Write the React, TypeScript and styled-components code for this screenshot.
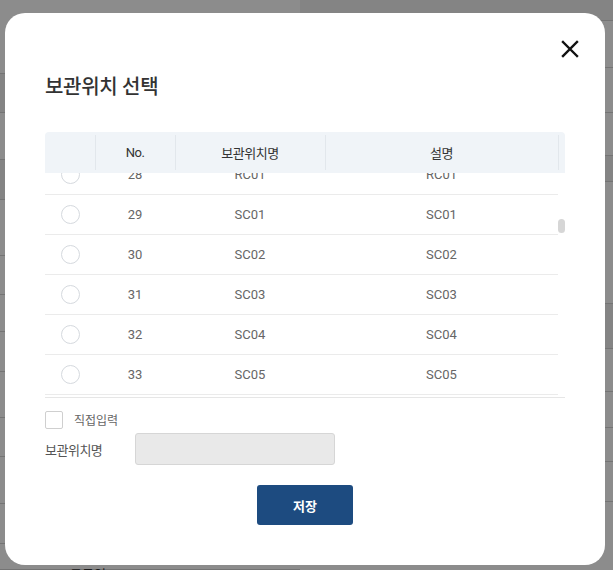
import React, { useEffect, useRef, useState } from 'react';
import styled, { createGlobalStyle } from 'styled-components';

const GlobalStyle = createGlobalStyle`
	* {
		box-sizing: border-box;
	}
	html, body {
		margin: 0;
		padding: 0;
		width: 613px;
		height: 570px;
		overflow: hidden;
		font-family: Roboto, 'Noto Sans CJK KR', sans-serif;
		background: #ffffff;
	}
`;

interface BgRow {
	height: number;
	shaded?: boolean;
	text?: string;
}

const leftRows: BgRow[] = [
	{ height: 74 },
	{ height: 39, shaded: true },
	{ height: 47 },
	{ height: 40, shaded: true },
	{ height: 56 },
	{ height: 39 },
	{ height: 37 },
	{ height: 40 },
	{ height: 46 },
	{ height: 39 },
	{ height: 47 },
	{ height: 40 },
	{ height: 26, text: '도급업' },
];

const rightRows: BgRow[] = [
	{ height: 12, shaded: true },
	{ height: 47 },
	{ height: 45 },
	{ height: 43 },
	{ height: 26, shaded: true },
	{ height: 122 },
	{ height: 45, shaded: true },
	{ height: 43 },
	{ height: 36 },
	{ height: 34 },
	{ height: 40 },
	{ height: 77 },
];

interface Location {
	no: number;
	name: string;
	desc: string;
}

const prefixCodes = ['RA', 'RB', 'RC'];

const buildLocations = (): Location[] => {
	const list: Location[] = [];
	for (let i = 1; i <= 131; i++) {
		let code = '';
		if (i < 28) {
			code = `${prefixCodes[Math.floor((i - 1) / 10) % 3]}${String(((i - 1) % 10) + 1).padStart(2, '0')}`;
		} else if (i === 28) {
			code = 'RC01';
		} else {
			code = `SC${String(i - 28).padStart(2, '0')}`;
		}
		list.push({ no: i, name: code, desc: code });
	}
	return list;
};

const VIEW_HEIGHT = 224;
const THUMB_MIN = 14;

const App: React.FC = () => {
	const [locations] = useState<Location[]>(buildLocations);
	const [selected, setSelected] = useState<number | null>(null);
	const [manual, setManual] = useState(false);
	const [manualName, setManualName] = useState('');
	const [thumb, setThumb] = useState({ top: 0, height: THUMB_MIN });
	const bodyRef = useRef<HTMLDivElement>(null);

	const updateThumb = () => {
		const el = bodyRef.current;
		if (!el) return;
		const height = Math.max(THUMB_MIN, (el.clientHeight * el.clientHeight) / el.scrollHeight);
		const range = el.scrollHeight - el.clientHeight;
		const top = range > 0 ? (el.scrollTop / range) * (el.clientHeight - height) : 0;
		setThumb({ top, height });
	};

	useEffect(() => {
		if (bodyRef.current) bodyRef.current.scrollTop = 1098;
		updateThumb();
	}, []);

	return (
		<>
			<GlobalStyle />
			<Page>
				<BgColumn $width={300}>
					{leftRows.map((row, i) => (
						<BgLine key={i} $height={row.height} $shaded={row.shaded}>
							{row.text && <BgText>{row.text}</BgText>}
						</BgLine>
					))}
				</BgColumn>
				<BgColumn $width={313}>
					{rightRows.map((row, i) => (
						<BgLine key={i} $height={row.height} $shaded={row.shaded} />
					))}
				</BgColumn>
			</Page>
			<Overlay>
				<Modal>
					<CloseRow>
						<CloseButton aria-label="닫기">
							<svg width="18" height="18" viewBox="0 0 18 18">
								<path d="M2 2 L16 16 M16 2 L2 16" stroke="#111" strokeWidth="2.4" strokeLinecap="square" />
							</svg>
						</CloseButton>
					</CloseRow>
					<Title>보관위치 선택</Title>
					<TableWrap>
						<HeaderRow>
							<HeaderCell />
							<HeaderCell $divider>No.</HeaderCell>
							<HeaderCell $divider>보관위치명</HeaderCell>
							<HeaderCell $divider>설명</HeaderCell>
							<HeaderCell $divider />
						</HeaderRow>
						<ScrollArea>
							<ScrollBody ref={bodyRef} onScroll={updateThumb}>
								{locations.map((loc) => (
									<BodyRow key={loc.no} onClick={() => setSelected(loc.no)}>
										<BodyCell>
											<Radio $checked={selected === loc.no} />
										</BodyCell>
										<BodyCell>{loc.no}</BodyCell>
										<BodyCell>{loc.name}</BodyCell>
										<BodyCell>{loc.desc}</BodyCell>
									</BodyRow>
								))}
							</ScrollBody>
							<Track>
								<Thumb style={{ marginTop: thumb.top, height: thumb.height }} />
							</Track>
						</ScrollArea>
					</TableWrap>
					<CheckRow>
						<CheckBox type="checkbox" checked={manual} onChange={(e) => setManual(e.target.checked)} />
						<CheckLabel>직접입력</CheckLabel>
					</CheckRow>
					<FieldRow>
						<FieldLabel>보관위치명</FieldLabel>
						<TextInput
							value={manualName}
							disabled={!manual}
							onChange={(e) => setManualName(e.target.value)}
						/>
					</FieldRow>
					<Footer>
						<SaveButton>저장</SaveButton>
					</Footer>
				</Modal>
			</Overlay>
		</>
	);
};

const Page = styled.div`
	display: flex;
	width: 613px;
	height: 570px;
	overflow: hidden;
`;

const BgColumn = styled.div<{ $width: number }>`
	width: ${(p) => p.$width}px;
	display: flex;
	flex-direction: column;
`;

const BgLine = styled.div<{ $height: number; $shaded?: boolean }>`
	flex: none;
	height: ${(p) => p.$height}px;
	border-bottom: 1px solid #d4d4d4;
	background: ${(p) => (p.$shaded ? '#f1f1f1' : '#ffffff')};
	padding-left: 70px;
	padding-top: 20px;
`;

const BgText = styled.span`
	font-size: 13px;
	color: #333;
`;

const Overlay = styled.div`
	position: fixed;
	inset: 0;
	background: rgba(0, 0, 0, 0.45);
	display: flex;
	padding: 13px 8px 5px 5px;
`;

const Modal = styled.div`
	flex: 1;
	background: #ffffff;
	border-radius: 20px;
	padding: 27px 40px 40px;
	display: flex;
	flex-direction: column;
`;

const CloseRow = styled.div`
	display: flex;
	justify-content: flex-end;
	margin-right: -14px;
`;

const CloseButton = styled.button`
	width: 18px;
	height: 18px;
	padding: 0;
	border: none;
	background: none;
	display: flex;
	cursor: pointer;
`;

const Title = styled.h2`
	margin: 15px 0 0;
	font-size: 20px;
	font-weight: 500;
	line-height: 28px;
	color: #333;
	letter-spacing: -0.3px;
`;

const TableWrap = styled.div`
	margin-top: 31px;
	border-bottom: 1px solid #e6e6e6;
`;

const columns = '50px 80px 150px 233px';

const HeaderRow = styled.div`
	display: grid;
	grid-template-columns: ${columns} 7px;
	height: 41px;
	background: #f0f4f8;
	border-radius: 4px 4px 0 0;
`;

const HeaderCell = styled.div<{ $divider?: boolean }>`
	position: relative;
	display: flex;
	align-items: center;
	justify-content: center;
	font-size: 13px;
	color: #333;
	letter-spacing: -0.5px;
	&::before {
		content: '';
		display: ${(p) => (p.$divider ? 'block' : 'none')};
		position: absolute;
		left: 0;
		top: 3px;
		bottom: 3px;
		width: 1px;
		background: #e2e7ec;
	}
`;

const ScrollArea = styled.div`
	display: flex;
	height: ${VIEW_HEIGHT}px;
`;

const ScrollBody = styled.div`
	width: 513px;
	height: 100%;
	overflow-y: scroll;
	scrollbar-width: none;
	&::-webkit-scrollbar {
		display: none;
	}
`;

const Track = styled.div`
	width: 7px;
	display: flex;
	flex-direction: column;
`;

const Thumb = styled.div`
	flex: none;
	width: 7px;
	border-radius: 4px;
	background: #d6d6d6;
`;

const BodyRow = styled.div`
	display: grid;
	grid-template-columns: ${columns};
	height: 40px;
	border-bottom: 1px solid #ebebeb;
	cursor: pointer;
`;

const BodyCell = styled.div`
	display: flex;
	align-items: center;
	justify-content: center;
	font-size: 13px;
	color: #666;
`;

const Radio = styled.span<{ $checked: boolean }>`
	width: 19px;
	height: 19px;
	border-radius: 50%;
	border: 1px solid #d5d9de;
	background: #fff;
	box-shadow: ${(p) => (p.$checked ? 'inset 0 0 0 4px #1d4b80' : 'none')};
`;

const CheckRow = styled.label`
	display: flex;
	align-items: center;
	margin-top: 12px;
	height: 20px;
`;

const CheckBox = styled.input`
	appearance: none;
	width: 18px;
	height: 18px;
	margin: 0;
	border: 1px solid #cfcfcf;
	border-radius: 2px;
	background: #fff;
	&:checked {
		background: #1d4b80;
		border-color: #1d4b80;
	}
`;

const CheckLabel = styled.span`
	margin-left: 11px;
	font-size: 12px;
	color: #666;
`;

const FieldRow = styled.div`
	display: flex;
	align-items: center;
	margin-top: 4px;
`;

const FieldLabel = styled.span`
	width: 90px;
	font-size: 13px;
	color: #555;
	letter-spacing: -0.5px;
`;

const TextInput = styled.input`
	width: 200px;
	height: 32px;
	border: 1px solid #d6d6d6;
	border-radius: 3px;
	background: #e9e9e9;
	padding: 0 10px;
	font-size: 13px;
	&:enabled {
		background: #fff;
	}
`;

const Footer = styled.div`
	display: flex;
	justify-content: center;
	margin-top: 20px;
`;

const SaveButton = styled.button`
	width: 96px;
	height: 40px;
	border: none;
	border-radius: 3px;
	background: #1d4b80;
	color: #fff;
	font-family: Roboto, 'Noto Sans CJK KR', sans-serif;
	font-size: 13px;
	font-weight: 700;
	cursor: pointer;
`;

export default App;
